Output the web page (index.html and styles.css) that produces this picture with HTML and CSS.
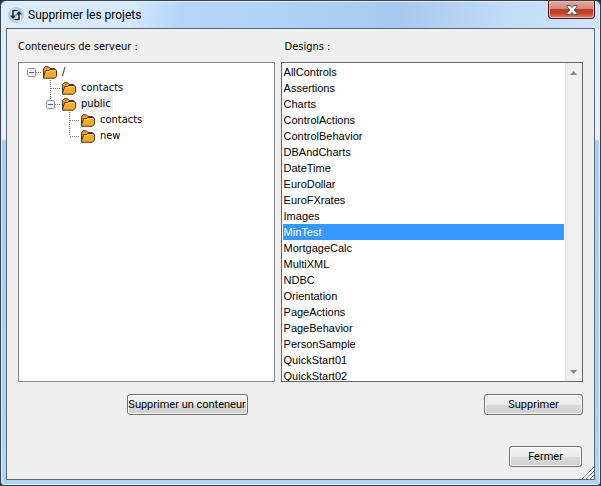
FILE: index.html
```html
<!DOCTYPE html>
<html lang="fr">
<head>
    <meta charset="utf-8">
    <title>Supprimer les projets</title>
    <link rel="stylesheet" href="styles.css">
</head>
<body>
    <svg width="0" height="0" class="symbols">
        <symbol id="folder" viewBox="0 0 15 13">
            <path d="M1.5 11V2.5L3 .8h3.5L8 2.5h4.5V5" fill="#f7a11b" stroke="#3f382c"/>
            <path d="M1.5 12.2V11l2.2-6.5h3l1-1h6.1l.7 1v5.6l-2 2.1z" fill="#ffa928" stroke="#3f382c"/>
            <path d="M4.5 5.5h3l1-1h4.5" fill="none" stroke="#ffd28a"/>
        </symbol>
        <symbol id="minus" viewBox="0 0 9 9">
            <rect x=".5" y=".5" width="8" height="8" rx="1" fill="#f4f4f4" stroke="#919191"/>
            <path d="M2 4.5h5" stroke="#3b5fa8"/>
        </symbol>
    </svg>

    <div class="window">
        <header class="titlebar">
            <svg class="app-icon" width="16" height="16" viewBox="0 0 16 16">
                <circle cx="8" cy="8" r="8" fill="#a9d2f3"/>
                <path d="M9.5 3.5H5V9M6.5 12.5H11V7" fill="none" stroke="#fff" stroke-width="3.5"/>
                <path d="M9.5 3.5H5V9M6.5 12.5H11V7" fill="none" stroke="#222" stroke-width="1.6"/>
                <path d="M2 8.5h6L5 12zM8 7.5h6L11 4z" fill="#222"/>
            </svg>
            <h1 class="title">Supprimer les projets</h1>
            <button class="close" aria-label="Fermer la fenêtre">
                <svg width="12" height="10" viewBox="0 0 12 10">
                    <path d="M1 .5h3.2L6 2.6 7.8.5H11v1.3L8.2 5 11 8.2v1.3H7.8L6 7.4 4.2 9.5H1V8.2L3.8 5 1 1.8z" fill="#f3f3f3" stroke="#53505c"/>
                </svg>
            </button>
        </header>

        <main class="content">
            <div class="columns">
                <section class="column containers">
                    <h2 class="label">Conteneurs de serveur :</h2>
                    <ul class="box tree">
                        <li>
                            <div class="node"><button class="toggle" aria-label="Réduire /"><svg width="9" height="9"><use href="#minus"/></svg></button><span class="dots"></span><svg width="15" height="13"><use href="#folder"/></svg><span class="name">/</span></div>
                            <ul class="branch">
                                <li><div class="node leaf"><span class="dots"></span><svg width="15" height="13"><use href="#folder"/></svg><span class="name">contacts</span></div></li>
                                <li>
                                    <div class="node"><button class="toggle" aria-label="Réduire public"><svg width="9" height="9"><use href="#minus"/></svg></button><span class="dots"></span><svg width="15" height="13"><use href="#folder"/></svg><span class="name current">public</span></div>
                                    <ul class="branch">
                                        <li><div class="node leaf"><span class="dots"></span><svg width="15" height="13"><use href="#folder"/></svg><span class="name">contacts</span></div></li>
                                        <li><div class="node leaf"><span class="dots"></span><svg width="15" height="13"><use href="#folder"/></svg><span class="name">new</span></div></li>
                                    </ul>
                                </li>
                            </ul>
                        </li>
                    </ul>
                    <button class="button remove-container">Supprimer un conteneur</button>
                </section>

                <section class="column designs">
                    <label class="label" for="designs">Designs :</label>
                    <div class="box list">
                        <select id="designs" class="designs-list" size="20">
                            <option>AllControls</option>
                            <option>Assertions</option>
                            <option>Charts</option>
                            <option>ControlActions</option>
                            <option>ControlBehavior</option>
                            <option>DBAndCharts</option>
                            <option>DateTime</option>
                            <option>EuroDollar</option>
                            <option>EuroFXrates</option>
                            <option>Images</option>
                            <option selected>MinTest</option>
                            <option>MortgageCalc</option>
                            <option>MultiXML</option>
                            <option>NDBC</option>
                            <option>Orientation</option>
                            <option>PageActions</option>
                            <option>PageBehavior</option>
                            <option>PersonSample</option>
                            <option>QuickStart01</option>
                            <option>QuickStart02</option>
                        </select>
                        <div class="scrollbar">
                            <svg width="7" height="4" viewBox="0 0 7 4"><path d="M3.5 0L7 4H0z" fill="#858585"/></svg>
                            <svg width="7" height="4" viewBox="0 0 7 4"><path d="M3.5 4L7 0H0z" fill="#858585"/></svg>
                        </div>
                    </div>
                    <button class="button remove">Supprimer</button>
                </section>
            </div>

            <footer class="footer">
                <button class="button dismiss">Fermer</button>
            </footer>
            <svg class="grip" width="12" height="12" viewBox="0 0 12 12">
                <path d="M0 12L12 0M4 12l8-8M8 12l4-4" stroke="#808080"/>
                <path d="M1.5 12L12 1.5M5.5 12L12 5.5M9.5 12L12 9.5" stroke="#fff"/>
            </svg>
        </main>
    </div>
</body>
</html>
```
FILE: styles.css
```css
* {
    box-sizing: border-box;
}

body {
    margin: 0;
    background: #26303b;
    color: #000;
    font: 11px/16px "DejaVu Sans Condensed", "DejaVu Sans", sans-serif;
}

.symbols {
    position: absolute;
}

ul {
    list-style: none;
    margin: 0;
    padding: 0;
}

svg {
    flex: none;
}

.window {
    display: flex;
    flex-direction: column;
    min-height: 100vh;
    padding: 0 5px 5px;
    border: 1px solid #39414b;
    border-radius: 6px 6px 4px 4px;
    background:
        linear-gradient(100deg, #e0edfc 0, #d6e8fc 22%, #b4d5f9 30%, #b0d3f9 45%, #a6c9ef 66%, #c3dbf6 84%, #d0e5fc 100%) top / 100% 28px no-repeat,
        linear-gradient(#dceafa 0, #e6f1fc 138px, #a9cdf5 140px, #b0d3f8 100%);
    box-shadow: inset 0 0 0 1px #e4f2ff;
}

.titlebar {
    display: flex;
    align-items: center;
    height: 27px;
    padding-left: 2px;
}

.title {
    flex: 1;
    margin: 0 0 0 4px;
    font: 12px/16px Roboto, "Open Sans", sans-serif;
}

.close {
    display: flex;
    align-items: center;
    justify-content: center;
    align-self: flex-start;
    width: 47px;
    height: 18px;
    padding: 0;
    border: 1px solid #48151c;
    border-top: 0;
    border-radius: 0 0 4px 4px;
    background: linear-gradient(#e2a99e 0, #d38678 48%, #bd3a25 50%, #c4452f 75%, #dd8768 100%);
    box-shadow: inset 0 0 0 1px #ecb9ae;
}

.content {
    position: relative;
    flex: 1;
    display: flex;
    flex-direction: column;
    justify-content: space-between;
    padding: 10px 11px 12px;
    border: 1px solid #586878;
    background: #efefef;
}

.columns {
    display: flex;
    gap: 6px;
}

.column {
    display: flex;
    flex-direction: column;
    min-width: 0;
}

.containers {
    flex: 257;
}

.designs {
    flex: 303;
}

.label {
    margin: 0 0 7px;
    font: inherit;
}

.designs .label {
    padding-left: 4px;
}

.box {
    height: 320px;
    border: 1px solid #828790;
    background: #fff;
}

.tree {
    padding: 1px 8px;
}

.branch {
    padding-left: 19px;
    background: repeating-linear-gradient(#777 0 1px, transparent 1px 2px) 23px 0 / 1px calc(100% - 8px) no-repeat;
}

/* the outer line stops at the last child, not at its descendants */
.tree > li > .branch {
    background-size: 1px 20px;
}

.node {
    display: flex;
    align-items: center;
    height: 16px;
}

.leaf {
    padding-left: 5px;
}

.toggle {
    display: flex;
    padding: 0;
    border: 0;
    background: none;
}

.dots {
    width: 6px;
    height: 1px;
    background: repeating-linear-gradient(90deg, #777 0 1px, transparent 1px 2px);
}

.leaf .dots {
    width: 10px;
}

.name {
    margin-left: 3px;
    padding: 0 2px;
}

.current {
    background: #efefef;
}

.list {
    display: flex;
    border-color: #646464;
}

.designs-list {
    flex: 1;
    min-width: 0;
    height: 100%;
    padding: 1px;
    border: 0;
    border-radius: 0;
    outline: 0;
    overflow: hidden;
    background: #fff;
    color: #000;
    font: 11px/16px "Liberation Sans", Arial, sans-serif;
}

.designs-list option {
    height: 16px;
    min-height: 16px;
    padding: 2px 1px 0;
}

.designs-list option:checked {
    background: linear-gradient(#3399ff, #3399ff);
    -webkit-text-fill-color: #fff;
}

.scrollbar {
    display: flex;
    flex-direction: column;
    align-items: center;
    justify-content: space-between;
    width: 17px;
    padding: 8px 0 7px;
    background: linear-gradient(90deg, #e6e6e6, #f0f0f0 4px);
}

.button {
    height: 21px;
    margin-top: 12px;
    padding: 0;
    border: 1px solid #707070;
    border-radius: 3px;
    background: linear-gradient(#f2f2f2 0, #ebebeb 50%, #dadada 51%, #cfcfcf 100%);
    box-shadow: inset 0 0 0 1px #fafafa;
    color: #000;
    font: 11px/16px Roboto, "Open Sans", sans-serif;
    white-space: nowrap;
}

.remove-container {
    align-self: flex-end;
    width: 121px;
    margin-right: 27px;
}

.remove {
    align-self: flex-end;
    width: 99px;
}

.footer {
    display: flex;
    justify-content: flex-end;
    padding-right: 1px;
}

.dismiss {
    width: 73px;
}

.grip {
    position: absolute;
    right: 0;
    bottom: 0;
}
```
